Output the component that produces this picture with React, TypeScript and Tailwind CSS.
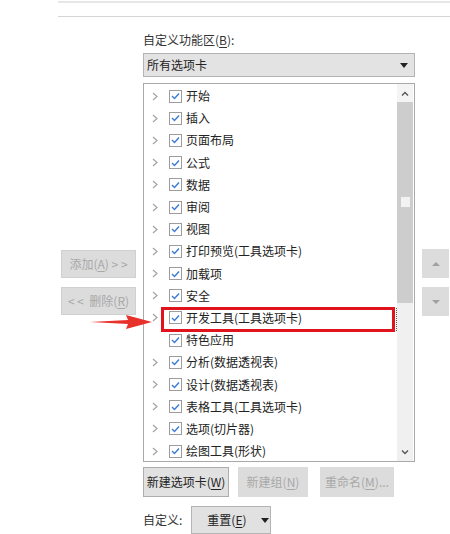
import { ReactNode } from 'react';

const items: { label: string; chevron: boolean }[] = [
  { label: '开始', chevron: true },
  { label: '插入', chevron: true },
  { label: '页面布局', chevron: true },
  { label: '公式', chevron: true },
  { label: '数据', chevron: true },
  { label: '审阅', chevron: true },
  { label: '视图', chevron: true },
  { label: '打印预览(工具选项卡)', chevron: true },
  { label: '加载项', chevron: true },
  { label: '安全', chevron: true },
  { label: '开发工具(工具选项卡)', chevron: true },
  { label: '特色应用', chevron: false },
  { label: '分析(数据透视表)', chevron: true },
  { label: '设计(数据透视表)', chevron: true },
  { label: '表格工具(工具选项卡)', chevron: true },
  { label: '选项(切片器)', chevron: true },
  { label: '绘图工具(形状)', chevron: true },
];

function Chevron() {
  return (
    <svg width="6" height="9" viewBox="0 0 6 9" className="shrink-0">
      <path d="M1 1 L5 4.5 L1 8" fill="none" stroke="#a3a3a3" strokeWidth="1.2" />
    </svg>
  );
}

function Check() {
  return (
    <span className="w-[13px] h-[13px] border border-[#9c9c9c] bg-white flex items-center justify-center shrink-0">
      <svg width="9" height="8" viewBox="0 0 9 8">
        <path d="M1 4 L3.5 6.5 L8 1.5" fill="none" stroke="#3a7bd5" strokeWidth="1.4" />
      </svg>
    </span>
  );
}

function U({ children }: { children: ReactNode }) {
  return <span className="underline underline-offset-2">{children}</span>;
}

function Caret({ color = '#222' }: { color?: string }) {
  return (
    <svg width="8" height="5" viewBox="0 0 8 5">
      <path d="M0 0 L8 0 L4 5 Z" fill={color} />
    </svg>
  );
}

export default function App() {
  return (
    <div
      className="relative w-[450px] h-[534px] bg-white overflow-hidden text-[12px] text-[#222]"
      style={{ fontFamily: '"Noto Sans CJK SC", "Noto Sans", sans-serif' }}
    >
      {/* top separators */}
      <div className="ml-[58px] mt-px h-[2px] bg-[#e6e6e6]" />
      <div className="ml-[58px] mt-[13px] h-px bg-[#d4d4d4]" />

      <div className="flex">
        {/* left add/remove buttons */}
        <div className="w-[143px] pl-[61px] pt-[233px] flex flex-col gap-[9px]">
          <div className="w-[75px] h-[28px] bg-[#dcdcdc] border border-[#d0d0d0] text-[#a8a8a8] flex items-center justify-center leading-none whitespace-pre">
            添加(<U>A</U>) &gt; &gt;
          </div>
          <div className="w-[75px] h-[28px] bg-[#dcdcdc] border border-[#d0d0d0] text-[#a8a8a8] flex items-center justify-center leading-none whitespace-pre">
            &lt; &lt;  删除(<U>R</U>)
          </div>
        </div>

        {/* center column */}
        <div className="w-[272px] pt-[15px] flex flex-col">
          <div className="h-4 leading-4 text-[#333]">
            自定义功能区(<U>B</U>):
          </div>

          <div className="mt-[5px] h-[24px] bg-[#e3e3e3] border border-[#b4b4b4] flex items-center justify-between pl-[3px] pr-[6px]">
            <span>所有选项卡</span>
            <Caret />
          </div>

          <div className="mt-[6px] h-[379px] border border-[#a9a9a9] flex bg-white overflow-hidden">
            <div className="flex-1 pt-px">
              {items.map((it) => (
                <div key={it.label} className="h-[22.2px] flex items-center pl-[8px]">
                  <span className="w-[6px] flex">{it.chevron && <Chevron />}</span>
                  <span className="ml-[11px]">
                    <Check />
                  </span>
                  <span className="ml-[4px] leading-none whitespace-nowrap">{it.label}</span>
                </div>
              ))}
            </div>

            {/* scrollbar */}
            <div className="w-[16px] mr-px flex flex-col bg-[#f0f0f0]">
              <div className="h-[18px] flex items-center justify-center bg-[#f4f4f4]">
                <svg width="8" height="5" viewBox="0 0 8 5">
                  <path d="M1 4.5 L4 1.5 L7 4.5" fill="none" stroke="#555" strokeWidth="1.4" />
                </svg>
              </div>
              <div className="h-[201px] bg-[#cdcdcd] flex flex-col items-center pt-[95px]">
                <div className="w-[9px] h-[10px] bg-[#f2f2f2]" />
              </div>
              <div className="flex-1" />
              <div className="h-[18px] flex items-center justify-center">
                <svg width="8" height="5" viewBox="0 0 8 5">
                  <path d="M1 0.5 L4 3.5 L7 0.5" fill="none" stroke="#555" strokeWidth="1.4" />
                </svg>
              </div>
            </div>
          </div>

          <div className="mt-[5px] flex gap-[8px] h-[30px]">
            <div className="w-[86px] bg-[#e1e1e1] border border-[#adadad] flex items-center justify-center leading-none">
              新建选项卡(<U>W</U>)
            </div>
            <div className="ml-[1px] w-[70px] bg-[#dcdcdc] text-[#a8a8a8] flex items-center justify-center leading-none">
              新建组(<U>N</U>)
            </div>
            <div className="ml-[4px] w-[74px] bg-[#dcdcdc] text-[#a8a8a8] flex items-center justify-center leading-none">
              重命名(<U>M</U>)...
            </div>
          </div>

          <div className="mt-[9px] h-[28px] flex items-center">
            <span className="text-[#333]">自定义:</span>
            <div className="ml-[9px] w-[80px] h-[28px] bg-[#e1e1e1] border border-[#b4b4b4] flex items-center pl-[15px] gap-[14px] leading-none">
              <span>
                重置(<U>E</U>)
              </span>
              <Caret />
            </div>
          </div>
        </div>

        {/* right up/down buttons */}
        <div className="pl-[7px] pt-[232px] flex flex-col gap-[9px]">
          <div className="w-[27px] h-[29px] bg-[#dcdcdc] flex items-center justify-center">
            <svg width="8" height="4" viewBox="0 0 8 4">
              <path d="M0 4 L8 4 L4 0 Z" fill="#a0a0a0" />
            </svg>
          </div>
          <div className="w-[27px] h-[29px] bg-[#dcdcdc] flex items-center justify-center">
            <svg width="8" height="4" viewBox="0 0 8 4">
              <path d="M0 0 L8 0 L4 4 Z" fill="#a0a0a0" />
            </svg>
          </div>
        </div>
      </div>

      {/* focus rect on selected row */}
      <div className="absolute left-[163px] top-[308px] w-[234px] h-[23px] border border-dotted border-[#555]" />

      {/* annotation: red highlight box */}
      <div className="absolute left-[161px] top-[307px] w-[234px] h-[25px] border-[3px] border-[#e1141e]" />

      {/* annotation: red arrow */}
      <svg className="absolute left-[90px] top-[314px]" width="64" height="16" viewBox="0 0 64 16">
        <path d="M0 8 L38 6 L36 1 L62 8 L36 15 L38 10 Z" fill="#e8312b" />
      </svg>
    </div>
  );
}
